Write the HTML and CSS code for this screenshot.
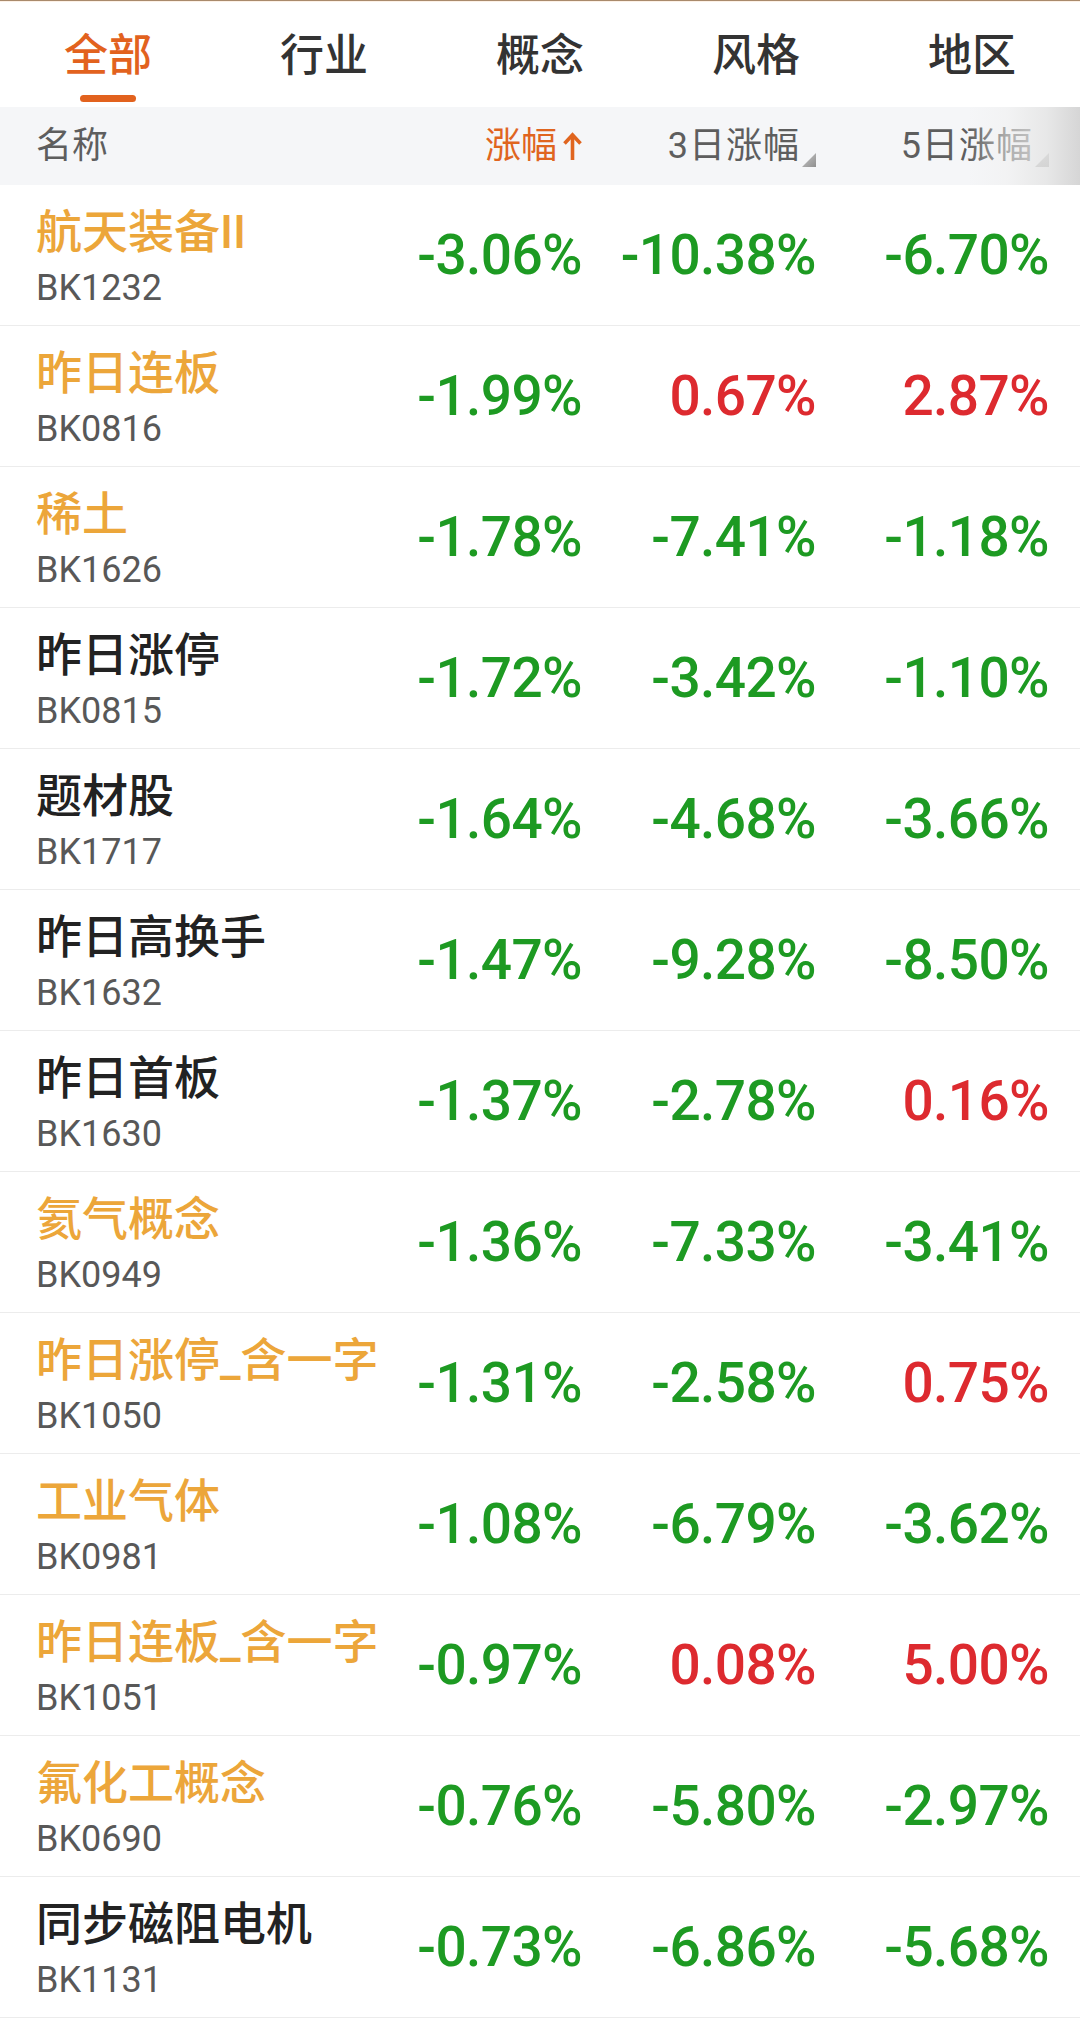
FILE: index.html
```html
<!DOCTYPE html>
<html lang="zh-CN">
<head>
<meta charset="utf-8">
<title>板块涨幅</title>
<link rel="stylesheet" href="styles.css">
</head>
<body>
<div class="page">
  <div class="topline"></div>
  <nav class="tabs">
    <div class="tab active"><span class="tab-label">全部</span><span class="tab-bar"></span></div>
    <div class="tab"><span class="tab-label">行业</span></div>
    <div class="tab"><span class="tab-label">概念</span></div>
    <div class="tab"><span class="tab-label">风格</span></div>
    <div class="tab"><span class="tab-label">地区</span></div>
  </nav>

  <div class="thead grid">
    <div class="th th-name">名称</div>
    <div class="th th-sort active-sort">
      <span>涨幅</span>
      <svg class="arrow" width="21" height="28" viewBox="0 0 21 28"><path d="M10.5 3.5 V28" stroke="#e0651f" stroke-width="3.6" fill="none"/><path d="M2.5 11.5 L10.5 3 L18.5 11.5" stroke="#e0651f" stroke-width="3.6" fill="none" stroke-linejoin="miter"/></svg>
    </div>
    <div class="th th-sort"><span>3日涨幅</span><span class="tri"></span></div>
    <div class="th th-sort"><span>5日涨幅</span><span class="tri"></span></div>
  </div>

  <div class="rows">
    <div class="row grid"><div class="name-cell"><span class="name hl">航天装备II</span><span class="code">BK1232</span></div><div class="num dn">-3.06%</div><div class="num dn">-10.38%</div><div class="num dn">-6.70%</div></div>
    <div class="row grid"><div class="name-cell"><span class="name hl">昨日连板</span><span class="code">BK0816</span></div><div class="num dn">-1.99%</div><div class="num up">0.67%</div><div class="num up">2.87%</div></div>
    <div class="row grid"><div class="name-cell"><span class="name hl">稀土</span><span class="code">BK1626</span></div><div class="num dn">-1.78%</div><div class="num dn">-7.41%</div><div class="num dn">-1.18%</div></div>
    <div class="row grid"><div class="name-cell"><span class="name">昨日涨停</span><span class="code">BK0815</span></div><div class="num dn">-1.72%</div><div class="num dn">-3.42%</div><div class="num dn">-1.10%</div></div>
    <div class="row grid"><div class="name-cell"><span class="name">题材股</span><span class="code">BK1717</span></div><div class="num dn">-1.64%</div><div class="num dn">-4.68%</div><div class="num dn">-3.66%</div></div>
    <div class="row grid"><div class="name-cell"><span class="name">昨日高换手</span><span class="code">BK1632</span></div><div class="num dn">-1.47%</div><div class="num dn">-9.28%</div><div class="num dn">-8.50%</div></div>
    <div class="row grid"><div class="name-cell"><span class="name">昨日首板</span><span class="code">BK1630</span></div><div class="num dn">-1.37%</div><div class="num dn">-2.78%</div><div class="num up">0.16%</div></div>
    <div class="row grid"><div class="name-cell"><span class="name hl">氦气概念</span><span class="code">BK0949</span></div><div class="num dn">-1.36%</div><div class="num dn">-7.33%</div><div class="num dn">-3.41%</div></div>
    <div class="row grid"><div class="name-cell"><span class="name hl">昨日涨停_含一字</span><span class="code">BK1050</span></div><div class="num dn">-1.31%</div><div class="num dn">-2.58%</div><div class="num up">0.75%</div></div>
    <div class="row grid"><div class="name-cell"><span class="name hl">工业气体</span><span class="code">BK0981</span></div><div class="num dn">-1.08%</div><div class="num dn">-6.79%</div><div class="num dn">-3.62%</div></div>
    <div class="row grid"><div class="name-cell"><span class="name hl">昨日连板_含一字</span><span class="code">BK1051</span></div><div class="num dn">-0.97%</div><div class="num up">0.08%</div><div class="num up">5.00%</div></div>
    <div class="row grid"><div class="name-cell"><span class="name hl">氟化工概念</span><span class="code">BK0690</span></div><div class="num dn">-0.76%</div><div class="num dn">-5.80%</div><div class="num dn">-2.97%</div></div>
    <div class="row grid"><div class="name-cell"><span class="name">同步磁阻电机</span><span class="code">BK1131</span></div><div class="num dn">-0.73%</div><div class="num dn">-6.86%</div><div class="num dn">-5.68%</div></div>
  </div>
</div>
</body>
</html>
```

FILE: styles.css
```css
* { box-sizing: border-box; }

html, body {
  margin: 0;
  padding: 0;
  background: #ffffff;
}

body {
  width: 1080px;
  font-family: "Roboto", "Noto Sans CJK SC", sans-serif;
  color: #222;
}

.page {
  width: 1080px;
  min-height: 2040px;
  background: #fff;
}

.topline {
  height: 2px;
  border-top: 1px solid #a98a6c;
  background: #fdf1e6;
}

.tabs {
  display: grid;
  grid-template-columns: repeat(5, 1fr);
  height: 105px;
  padding-top: 28px;
}

.tab {
  display: flex;
  flex-direction: column;
  align-items: center;
}

.tab-label {
  font-family: "Noto Sans CJK SC", sans-serif;
  font-size: 44px;
  line-height: 44px;
  font-weight: 500;
  color: #333;
}

.tab.active .tab-label {
  color: #e2621e;
}

.tab-bar {
  width: 56px;
  height: 7px;
  border-radius: 4px;
  background: #e2621e;
  margin-top: 21px;
}

.grid {
  display: grid;
  grid-template-columns: minmax(0, 1fr) 234px 234px 233px;
  padding: 0 31px 0 36px;
  align-items: center;
}

.thead {
  position: relative;
  height: 78px;
  background: #f5f6f8;
  font-family: "Roboto", "Noto Sans CJK SC", sans-serif;
  font-size: 36px;
  line-height: 44px;
  color: #5e5e5e;
}

.thead::after {
  content: "";
  position: absolute;
  top: 0;
  right: 0;
  bottom: 0;
  width: 112px;
  background: linear-gradient(to right,
    rgba(246, 246, 247, 0) 0%,
    rgba(240, 240, 240, 0.55) 35%,
    rgba(228, 228, 228, 0.8) 70%,
    rgba(212, 212, 212, 0.95) 100%);
}

.th-name {
  white-space: nowrap;
}

.th-sort {
  display: flex;
  justify-content: flex-end;
  align-items: center;
  white-space: nowrap;
  letter-spacing: 1px;
}

.active-sort {
  color: #e0651f;
  letter-spacing: 0;
}

.arrow {
  margin-left: 5px;
  margin-right: -1px;
  flex: none;
}

.tri {
  flex: none;
  align-self: flex-end;
  width: 14px;
  height: 14px;
  margin-left: 2px;
  margin-bottom: 1px;
  background: linear-gradient(135deg, #c9c9c9, #8f8f8f);
  clip-path: polygon(100% 0, 100% 100%, 0 100%);
}

.row {
  height: 141px;
  border-bottom: 1px solid #ececec;
}

.name-cell {
  display: flex;
  flex-direction: column;
  padding-top: 6px;
  white-space: nowrap;
  min-width: 0;
  overflow: visible;
}

.name {
  font-family: "Roboto", "Noto Sans CJK SC", sans-serif;
  font-size: 46px;
  line-height: 52px;
  font-weight: 500;
  color: #222;
}

.name.hl {
  color: #eca63a;
}

.code {
  font-family: "Roboto", sans-serif;
  font-size: 36px;
  line-height: 44px;
  margin-top: 8px;
  color: #585858;
}

.num {
  text-align: right;
  font-family: "Roboto", sans-serif;
  font-size: 55px;
  line-height: 60px;
  font-weight: 500;
  letter-spacing: -0.6px;
  white-space: nowrap;
}

.num.dn {
  color: #1d9a22;
}

.num.up {
  color: #dd2a2f;
}
```
